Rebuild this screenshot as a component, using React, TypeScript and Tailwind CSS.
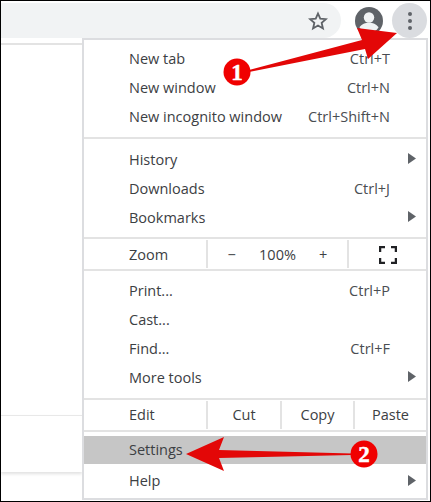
import React from 'react';

const Arrow = () => (
  <svg width="8" height="11" viewBox="0 0 8 11" className="relative top-[-1px]"><path d="M0 0l8 5.500-8 5.500z" fill="#5f6368" /></svg>
);

const Item = ({ label, hint, arrow, className = 'h-[29px]' }: { label: string; hint?: string; arrow?: boolean; className?: string }) => (
  <div className={`flex items-center pl-[45px] pr-[10px] text-[14.5px] ${className}`}>
    <span className="flex-1">{label}</span>
    {hint && <span className="pr-[26px] text-[#4a4d52]">{hint}</span>}
    {arrow && <Arrow />}
  </div>
);

const Sep = () => <div className="my-[6px] h-[2px] bg-[#e3e3e3]" />;

const ActionCell = ({ children, w }: { children: React.ReactNode; w: string }) => (
  <div className={`flex h-full items-center justify-center border-l-2 border-[#e3e3e3] ${w}`}>{children}</div>
);

export default function App() {
  return (
    <div className="relative flex h-[502px] w-[431px] flex-col overflow-hidden border border-black bg-white font-['Open_Sans',sans-serif] text-[#3c4043]">
      {/* toolbar */}
      <div className="flex h-[37px] shrink-0 items-center bg-white pt-[2px]">
        <div className="flex h-[35px] flex-1 items-center justify-end rounded-r-full bg-[#f1f3f4] pr-[13px]">
          <svg width="20" height="20" viewBox="0 0 24 24" fill="none" stroke="#5f6368" strokeWidth="2.2" strokeLinejoin="miter">
            <path d="M12 3l2.7 6.2 6.8.6-5.1 4.5 1.500 6.600-5.900-3.500-5.900 3.500 1.500-6.600-5.100-4.500 6.800-.6z" />
          </svg>
        </div>
        <svg className="ml-[14px]" width="28" height="28" viewBox="0 0 28 28">
          <circle cx="14" cy="14" r="14" fill="#5f6368" />
          <circle cx="14" cy="10.5" r="5.2" fill="#f1f3f4" />
          <path d="M4.500 20.500c2-3.600 6-4.800 9.500-4.800s7.500 1.200 9.500 4.800c-2 3.200-5.500 5.300-9.500 5.300s-7.500-2.100-9.500-5.300z" fill="#f1f3f4" />
        </svg>
        <div className="ml-[9px] mr-[3px] flex h-[35px] w-[35px] flex-col items-center justify-center gap-[3px] rounded-full bg-[#dadce0]">
          <span className="h-[4px] w-[4px] rounded-full bg-[#5f6368]" />
          <span className="h-[4px] w-[4px] rounded-full bg-[#5f6368]" />
          <span className="h-[4px] w-[4px] rounded-full bg-[#5f6368]" />
        </div>
      </div>

      <div className="flex min-h-0 flex-1">
        {/* page behind the menu */}
        <div className="flex w-[81px] shrink-0 flex-col pt-[5px]">
          <div className="h-[372px] border-t-2 border-[#e3e3e3]" />
          <div className="h-[57px] border-t border-[#e8e8e8] shadow-[0_2px_3px_rgba(0,0,0,0.12)]" />
        </div>

        {/* chrome menu */}
        <div className="mb-[1px] mr-[2px] flex-1 border-2 border-[#dcdde0] bg-white pt-[4px]">
          <Item label="New tab" hint="Ctrl+T" />
          <Item label="New window" hint="Ctrl+N" />
          <Item label="New incognito window" hint="Ctrl+Shift+N" />
          <Sep />
          <Item label="History" arrow />
          <Item label="Downloads" hint="Ctrl+J" />
          <Item label="Bookmarks" arrow />
          <div className="mt-[5px] flex h-[34px] items-stretch border-y-2 border-[#e3e3e3] py-px text-[14.5px]">
            <span className="w-[122px] pl-[45px] pt-[4px]">Zoom</span>
            <ActionCell w="w-[141px]">
              <div className="flex w-full items-center justify-around px-[8px] pt-[2px]">
                <span>−</span>
                <span>100%</span>
                <span>+</span>
              </div>
            </ActionCell>
            <ActionCell w="flex-1">
              <svg className="mt-[2px]" width="18" height="18" viewBox="0 0 18 18" fill="none" stroke="#202124" strokeWidth="2.5">
                <path d="M1 6V1h5M12 1h5v5M17 12v5h-5M6 17H1v-5" />
              </svg>
            </ActionCell>
          </div>
          <div className="h-[5px]" />
          <Item label="Print..." hint="Ctrl+P" />
          <Item label="Cast..." />
          <Item label="Find..." hint="Ctrl+F" />
          <Item label="More tools" arrow />
          <div className="mt-[6px] flex h-[34px] items-stretch border-y-2 border-[#e3e3e3] py-px text-[14.5px]">
            <span className="w-[122px] pl-[45px] pt-[3px]">Edit</span>
            <ActionCell w="w-[74px]">Cut</ActionCell>
            <ActionCell w="w-[73px]">Copy</ActionCell>
            <ActionCell w="flex-1">Paste</ActionCell>
          </div>
          <div className="h-[4px]" />
          <Item label="Settings" className="h-[28px] bg-[#c6c6c6]" />
          <Item label="Help" arrow className="h-[34px]" />
        </div>
      </div>

      {/* callouts drawn over the screenshot */}
      <svg className="absolute left-[-1px] top-[-1px]" width="431" height="502" viewBox="0 0 431 502">
        <path d="M249 70L362 40 357 28 397 33 368 59 365 49 249 72z" fill="#e30707" />
        <circle cx="237" cy="72" r="13.5" fill="#f00000" />
        <text x="237" y="80" textAnchor="middle" fontFamily="'Liberation Serif', serif" fontWeight="700" fontSize="23" fill="#fff" stroke="#fff" strokeWidth="0.5">1</text>
        <path d="M186 454L224 437 219 450 352 453.500 352 455 219 458 224 471z" fill="#e30707" />
        <circle cx="364" cy="454" r="13.500" fill="#f00000" />
        <text x="364" y="462" textAnchor="middle" fontFamily="'Liberation Serif', serif" fontWeight="700" fontSize="23" fill="#fff" stroke="#fff" strokeWidth="0.5">2</text>
      </svg>
    </div>
  );
}
